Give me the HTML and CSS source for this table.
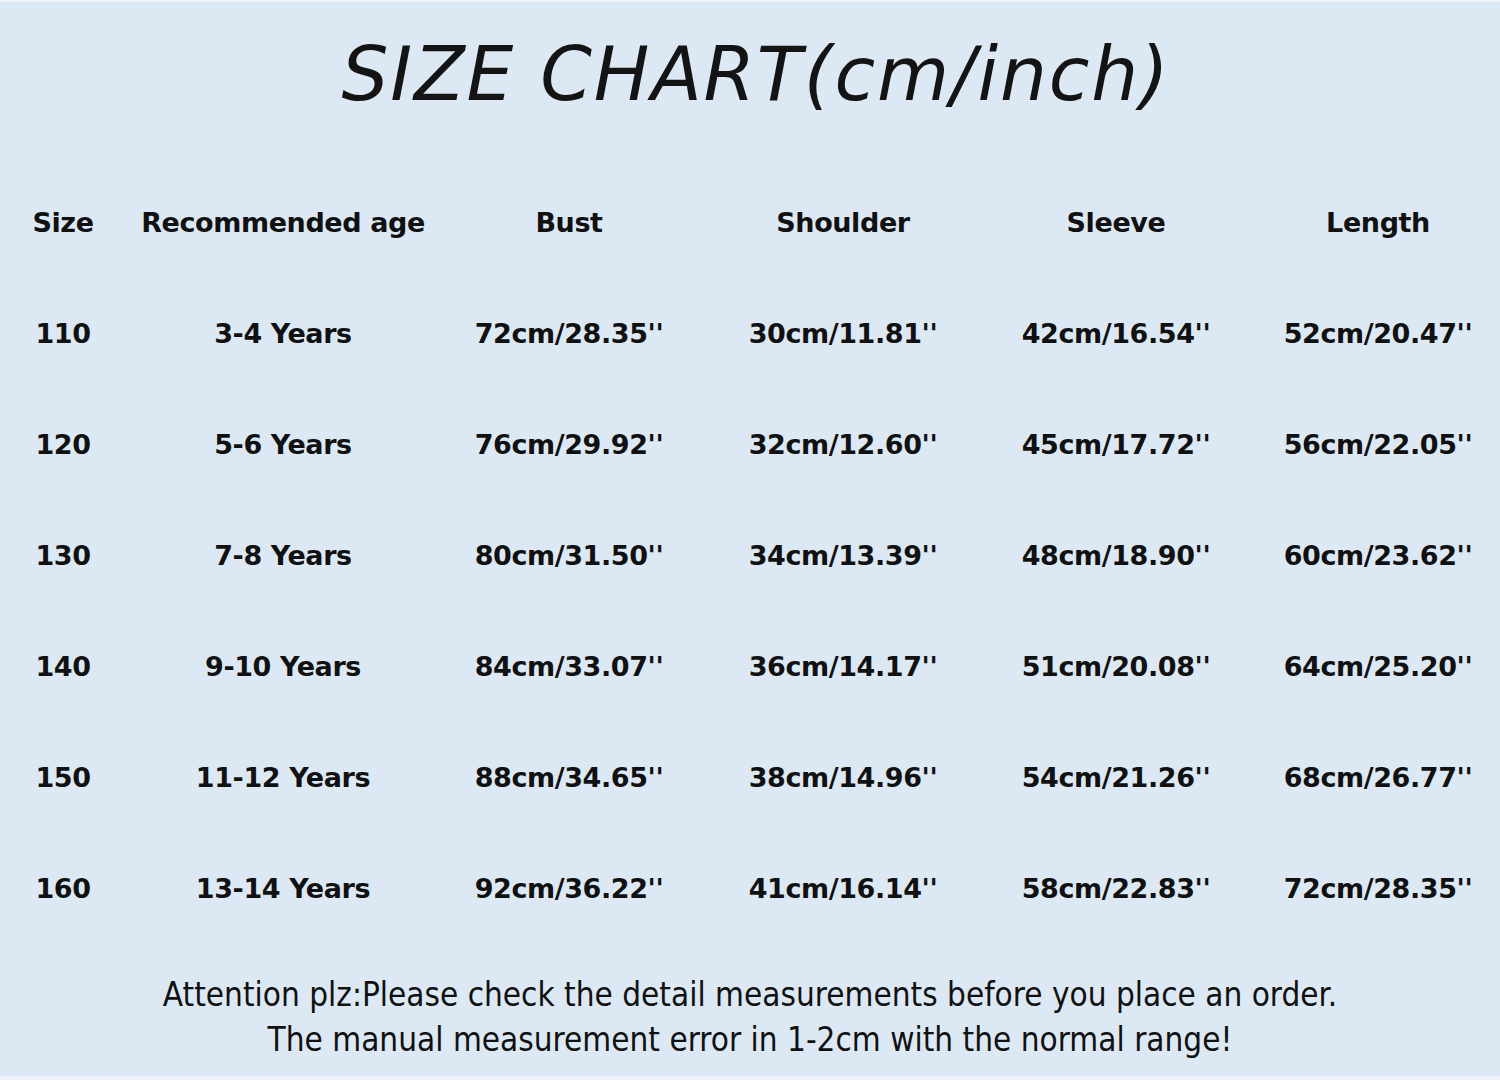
FILE: index.html
```html
<!DOCTYPE html>
<html lang="en">
<head>
<meta charset="utf-8">
<title>Size Chart</title>
<link rel="stylesheet" href="styles.css">
</head>
<body>
<main class="page">
  <h1 class="title">SIZE CHART(cm/inch)</h1>
  <div class="chart">
    <div class="cell head">Size</div>
    <div class="cell head">Recommended age</div>
    <div class="cell head">Bust</div>
    <div class="cell head">Shoulder</div>
    <div class="cell head">Sleeve</div>
    <div class="cell head">Length</div>

    <div class="cell">110</div><div class="cell">3-4 Years</div><div class="cell">72cm/28.35''</div><div class="cell">30cm/11.81''</div><div class="cell">42cm/16.54''</div><div class="cell">52cm/20.47''</div>
    <div class="cell">120</div><div class="cell">5-6 Years</div><div class="cell">76cm/29.92''</div><div class="cell">32cm/12.60''</div><div class="cell">45cm/17.72''</div><div class="cell">56cm/22.05''</div>
    <div class="cell">130</div><div class="cell">7-8 Years</div><div class="cell">80cm/31.50''</div><div class="cell">34cm/13.39''</div><div class="cell">48cm/18.90''</div><div class="cell">60cm/23.62''</div>
    <div class="cell">140</div><div class="cell">9-10 Years</div><div class="cell">84cm/33.07''</div><div class="cell">36cm/14.17''</div><div class="cell">51cm/20.08''</div><div class="cell">64cm/25.20''</div>
    <div class="cell">150</div><div class="cell">11-12 Years</div><div class="cell">88cm/34.65''</div><div class="cell">38cm/14.96''</div><div class="cell">54cm/21.26''</div><div class="cell">68cm/26.77''</div>
    <div class="cell">160</div><div class="cell">13-14 Years</div><div class="cell">92cm/36.22''</div><div class="cell">41cm/16.14''</div><div class="cell">58cm/22.83''</div><div class="cell">72cm/28.35''</div>
  </div>
  <div class="note">
    <p class="note-line">Attention plz:Please check the detail measurements before you place an order.</p>
    <p class="note-line">The manual measurement error in 1-2cm with the normal range!</p>
  </div>
</main>
</body>
</html>
```

FILE: styles.css
```css
html, body {
  margin: 0;
  padding: 0;
  background: #dce9f4;
}

.page {
  width: 1500px;
  height: 1080px;
  box-sizing: border-box;
  border-top: 2px solid #eef4fa;
  border-bottom: 4px solid #eef4fa;
  background: #dce9f4;
  color: #111;
  overflow: hidden;
}

.title {
  margin: 0;
  padding-top: 26px;
  padding-left: 12px;
  height: 165px;
  box-sizing: border-box;
  text-align: center;
  font-family: "DejaVu Sans", sans-serif;
  font-style: italic;
  font-weight: normal;
  font-size: 74px;
  line-height: 92px;
  letter-spacing: 1.8px;
  color: #141414;
}

.chart {
  display: grid;
  grid-template-columns: 126px 314px 258px 290px 256px 256px;
  grid-auto-rows: 111px;
}

.cell {
  display: flex;
  align-items: center;
  justify-content: center;
  font-family: "DejaVu Sans", sans-serif;
  font-weight: bold;
  font-size: 27px;
  letter-spacing: -0.4px;
  color: #111;
}

.cell:nth-child(6n) {
  padding-left: 12px;
}

.note {
  padding-top: 28px;
  text-align: center;
}

.note-line {
  margin: 0;
  font-family: "DejaVu Sans Condensed", "DejaVu Sans", sans-serif;
  font-stretch: condensed;
  font-size: 33px;
  line-height: 45px;
  color: #111;
}
```
